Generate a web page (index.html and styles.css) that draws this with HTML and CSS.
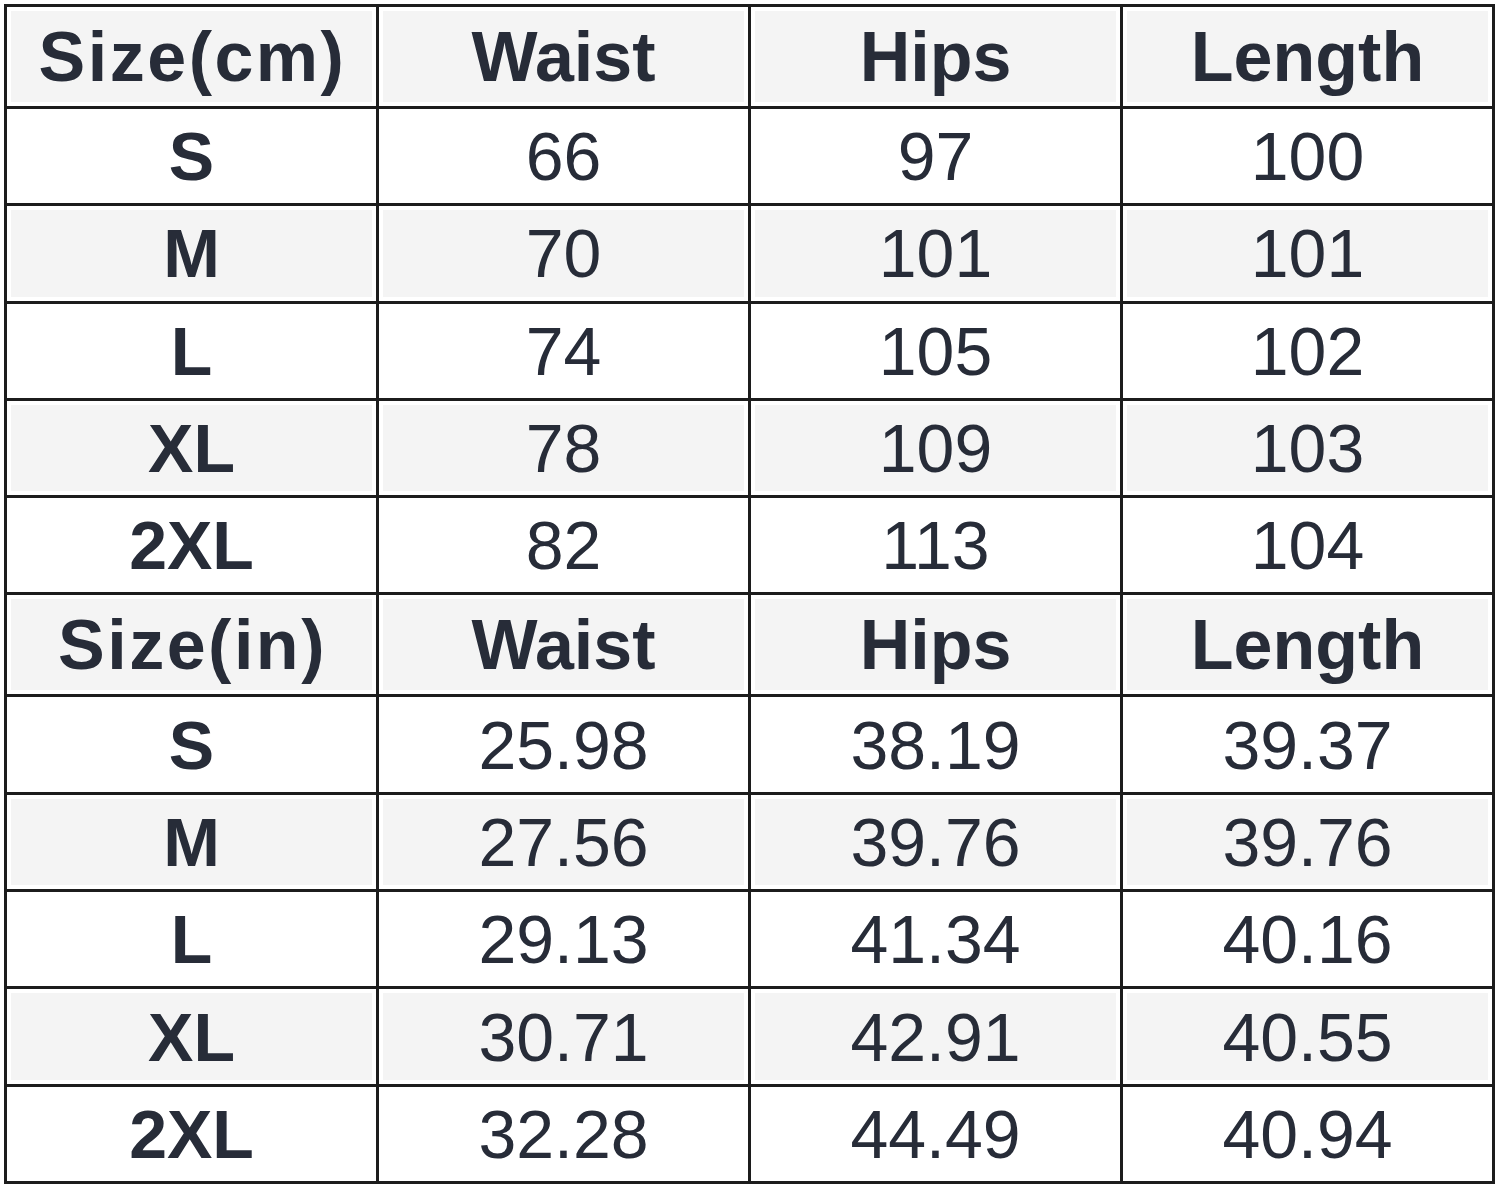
FILE: index.html
```html
<!DOCTYPE html>
<html>
<head>
<meta charset="utf-8">
<link rel="stylesheet" href="styles.css">
</head>
<body>
<table class="size-chart">
  <tr class="head shade"><td class="corner">Size(cm)</td><td>Waist</td><td>Hips</td><td>Length</td></tr>
  <tr><td class="size">S</td><td>66</td><td>97</td><td>100</td></tr>
  <tr class="shade"><td class="size">M</td><td>70</td><td>101</td><td>101</td></tr>
  <tr><td class="size">L</td><td>74</td><td>105</td><td>102</td></tr>
  <tr class="shade"><td class="size">XL</td><td>78</td><td>109</td><td>103</td></tr>
  <tr><td class="size">2XL</td><td>82</td><td>113</td><td>104</td></tr>
  <tr class="head shade"><td class="corner">Size(in)</td><td>Waist</td><td>Hips</td><td>Length</td></tr>
  <tr><td class="size">S</td><td>25.98</td><td>38.19</td><td>39.37</td></tr>
  <tr class="shade"><td class="size">M</td><td>27.56</td><td>39.76</td><td>39.76</td></tr>
  <tr><td class="size">L</td><td>29.13</td><td>41.34</td><td>40.16</td></tr>
  <tr class="shade"><td class="size">XL</td><td>30.71</td><td>42.91</td><td>40.55</td></tr>
  <tr><td class="size">2XL</td><td>32.28</td><td>44.49</td><td>40.94</td></tr>
</table>
</body>
</html>
```
FILE: styles.css
```css
html, body {
  margin: 0;
  padding: 0;
  background: #ffffff;
}

body {
  padding: 4px 0 0 4px;
}

.size-chart {
  border-collapse: collapse;
  border: 3px solid #1c1c1c;
  table-layout: fixed;
  width: 1491px;
  font-family: "Liberation Sans", Arial, sans-serif;
  font-size: 68px;
  color: #272c38;
}

.size-chart td {
  box-sizing: border-box;
  border: 3px solid #1c1c1c;
  height: 97.3px;
  padding: 0;
  text-align: center;
  vertical-align: middle;
  line-height: 1;
}

.size-chart .head td {
  height: 102px;
  font-weight: bold;
  font-size: 70px;
}

.size-chart .head .corner {
  letter-spacing: 2.5px;
  text-indent: 2px;
}

.size-chart .size {
  font-weight: bold;
}

.size-chart .shade td {
  background: #f4f4f4;
  box-shadow: inset 0 0 0 4px #ffffff;
}
```
